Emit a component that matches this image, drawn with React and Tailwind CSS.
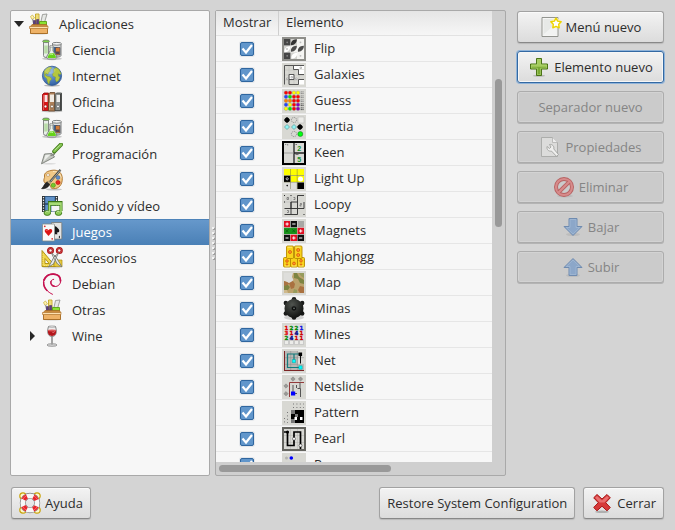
import React, { useState } from "react";

/* ---------- Category icons (22 x 22) ---------- */

function Icon({ children, size = 22, className = "" }) {
  return (
    <svg
      viewBox={`0 0 ${size} ${size}`}
      width={size}
      height={size}
      className={`shrink-0 ${className}`}
      aria-hidden="true"
    >
      {children}
    </svg>
  );
}

function BoxIcon() {
  return (
    <Icon>
      <ellipse cx="11" cy="20.5" rx="9.5" ry="1" fill="#000" opacity=".15" />
      <path d="M7.500 1h3.500v10H7.500z" fill="#f9e98c" stroke="#b99a12" strokeWidth=".8" />
      <path d="M8.500 3h1M8.500 5h1" stroke="#b99a12" strokeWidth=".6" />
      <path d="M2.500 3.500l2-1.500 2 3-2.500 1.500z" fill="#fff3b0" stroke="#c9b23c" strokeWidth=".7" />
      <path d="M4.500 6l1.500 6" stroke="#999" strokeWidth="1.200" />
      <path d="M5.500 7.500h2V12h-2zM8.500 6.500h2.200V12H8.500z" fill="#5b3b80" stroke="#3c2459" strokeWidth=".5" />
      <path d="M14.500 1.500l4.500-.5-2.500 8.500-4 1z" fill="#e6e8e5" stroke="#8b8d89" strokeWidth=".8" />
      <path d="M11.500 8.500h7v3.500h-7z" fill="#8ae234" stroke="#4e9a06" strokeWidth=".8" />
      <path d="M2 14L4 11.500h14.500l1.500 2.500z" fill="#c98a3c" stroke="#a86a22" strokeWidth=".7" />
      <path d="M2.500 15h17v5.500h-17z" fill="#eeb267" stroke="#a4661c" strokeWidth=".9" />
      <path d="M1.500 13.500h18.500v2H1.500z" fill="#fde0b0" stroke="#b57a34" strokeWidth=".7" />
    </Icon>
  );
}

function ScienceIcon() {
  return (
    <Icon>
      <ellipse cx="11" cy="19.800" rx="10" ry="1.400" fill="#000" opacity=".2" />
      <path d="M2.500 2v14.500a2.500 2 0 0 0 5 0V2z" fill="#e9eeea" stroke="#777c78" strokeWidth=".9" />
      <path d="M3.200 6.500h3.600v8h-3.600z" fill="#b9dca8" />
      <ellipse cx="5" cy="2.300" rx="3.400" ry="1.300" fill="#7ed649" stroke="#707570" strokeWidth=".8" />
      <path d="M11.500 5v11.500c0 2 8.500 2 8.500 0V5z" fill="#dfe2e3" stroke="#6d7070" strokeWidth=".9" />
      <ellipse cx="15.800" cy="4.800" rx="4.700" ry="1.400" fill="#f4f5f5" stroke="#6d7070" strokeWidth=".9" />
      <path d="M12.500 8h4v6h-4z" fill="#3b6495" />
      <path d="M14.500 8.500h4.500v7.500h-4.500z" fill="#d17a35" stroke="#4b4b57" strokeWidth=".7" />
      <path d="M15 12.500h3.500v2.500H15z" fill="#574756" />
      <path d="M9 7.500h3v4.500l3.500 5c.8 1.800-.3 3-1.800 3H7.800c-1.700 0-2.600-1.200-1.800-3L9 12z" fill="#edf3ec" stroke="#737973" strokeWidth=".9" />
      <path d="M8.500 14.200h4.400l2 3.200c.4 1.200-.3 1.700-1.300 1.700H8c-1.200 0-1.700-.6-1.200-1.700z" fill="#66d31b" />
      <path d="M8.700 15.500c1.500-1 2.400.2 3.300 0" stroke="#d9ffb4" strokeWidth=".9" fill="none" />
      <ellipse cx="10.500" cy="7.300" rx="2.200" ry=".8" fill="#fff" stroke="#7c817c" strokeWidth=".7" />
    </Icon>
  );
}

function GlobeIcon() {
  return (
    <Icon>
      <defs>
        <radialGradient id="globe" cx=".4" cy=".3" r=".75">
          <stop offset="0" stopColor="#86b1e4" />
          <stop offset="1" stopColor="#2c5c9f" />
        </radialGradient>
      </defs>
      <ellipse cx="11" cy="20.500" rx="8" ry="1.200" fill="#000" opacity=".25" />
      <circle cx="11" cy="10.800" r="9.600" fill="url(#globe)" stroke="#2d5795" strokeWidth=".8" />
      <path d="M3 6.500C5 3 8 1.800 10 2l.5 1.500-2 1.200 1 1.500-2 1.300-.5 2-2-1-.8 1.500 2 1.200 3 .8 1.500 2-2 2.200-.7 3.300-1.500-2.500-.5-3-2.500-2.500z" fill="#b5c73e" stroke="#879a24" strokeWidth=".4" />
      <path d="M12.500 4.500l2.500-2 3 2 2 4-.8 1.200-2-1 .3 2.500 1.500.8-1.500 3.500-2 1.500-1.200-2.500.2-2.500-2.500-.7-.5-2.500 1.500-1.300z" fill="#b5c73e" stroke="#879a24" strokeWidth=".4" />
      <ellipse cx="9" cy="5.500" rx="5.500" ry="3.500" fill="#fff" opacity=".17" />
    </Icon>
  );
}

function BindersIcon() {
  return (
    <Icon>
      <ellipse cx="11" cy="20.300" rx="10.500" ry="1" fill="#000" opacity=".22" />
      <path d="M1.500 3.500L3 2h4.500v17.500h-6z" fill="#d71717" stroke="#8f0808" strokeWidth=".8" />
      <path d="M3.500 4h3v7h-3z" fill="#f8e4e4" />
      <path d="M2.500 4v15" stroke="#ee6464" strokeWidth=".8" />
      <path d="M7.500 3l1.500-1.500h4.800V20H7.500z" fill="#ad8059" stroke="#684427" strokeWidth=".8" />
      <path d="M9 3.500h4V11H9z" fill="#f2ece4" />
      <path d="M8.500 12v7" stroke="#d3ad87" strokeWidth=".8" />
      <path d="M14 3.500L15.500 2H20.500v17.500H14z" fill="#8b8f8d" stroke="#393c3b" strokeWidth=".8" />
      <path d="M15.500 4h3.500v7h-3.500z" fill="#efefed" />
      <path d="M19.700 3v16" stroke="#333" strokeWidth="1" />
      <circle cx="4.500" cy="15.500" r="1.400" fill="#fff" stroke="#900" strokeWidth=".6" />
      <circle cx="11" cy="15.500" r="1.400" fill="#fff" stroke="#64482f" strokeWidth=".6" />
      <circle cx="17" cy="15.500" r="1.400" fill="#fff" stroke="#444" strokeWidth=".6" />
    </Icon>
  );
}

function TrowelIcon() {
  return (
    <Icon>
      <ellipse cx="8" cy="20.800" rx="7" ry=".8" fill="#000" opacity=".12" />
      <path d="M3.500 11l7.500-.5 2.500 3.500L.5 20.800z" fill="#c3c6c0" stroke="#787d76" strokeWidth=".9" />
      <path d="M4.500 12l5-.4L2.500 18.500z" fill="#eceeea" />
      <path d="M9.500 12.500l3.500-1 1-2.500" fill="none" stroke="#83887f" strokeWidth="1.500" />
      <path d="M13.200 8.500L20 1.500" stroke="#447b1b" strokeWidth="4" strokeLinecap="round" />
      <path d="M13.400 8.200L20 1.600" stroke="#85c553" strokeWidth="2.400" strokeLinecap="round" />
      <path d="M13.800 7.200l5-5" stroke="#c2e9a0" strokeWidth=".8" />
    </Icon>
  );
}

function PaletteIcon() {
  return (
    <Icon>
      <ellipse cx="13" cy="20.500" rx="8" ry=".9" fill="#000" opacity=".2" />
      <path d="M12 1.200c5.500-.5 9.300 3 9.300 8.500 0 6-3.300 10-8.500 10-4 0-2.800-3-4.800-4.500C6 13.800 3.800 15 3 12.500c-.7-2.500 1-3.500.5-5.500C3 4 6.500 1.700 12 1.200z" fill="#f2c987" stroke="#aa7128" strokeWidth=".9" />
      <path d="M12 2.500c4-.3 7.700 2 8 6.500" stroke="#fde8bf" fill="none" strokeWidth="1" />
      <ellipse cx="7" cy="6" rx="1.800" ry="1.300" fill="#f7f7f7" stroke="#b58543" strokeWidth=".6" />
      <circle cx="17" cy="8.500" r="1.900" fill="#5f8ecb" stroke="#345f9b" strokeWidth=".5" />
      <circle cx="17" cy="13.500" r="2.100" fill="#ec2222" stroke="#a40000" strokeWidth=".5" />
      <circle cx="12.300" cy="16.300" r="2.100" fill="#75c92b" stroke="#3f8506" strokeWidth=".5" />
      <path d="M19.500.800L8 14" stroke="#494b47" strokeWidth="2.200" />
      <path d="M19.300 1.300L9.500 12.500" stroke="#bfc2bc" strokeWidth=".8" />
      <path d="M6.500 12.500l2.500 2c-1.200 4-4.500 5.500-8.500 5.200C3 17.500 3.500 14 6.500 12.500z" fill="#272727" stroke="#111" strokeWidth=".5" />
      <path d="M6 12.800l2.700 2.200 1.300-1.600-2.600-2z" fill="#bfa77c" />
    </Icon>
  );
}

function MediaIcon() {
  return (
    <Icon>
      <path d="M1 1h16v16H1z" fill="#2e3436" />
      <path d="M4 1.500h10v7H4zM4 9.500h10v7H4z" fill="#5f91c8" stroke="#27517f" strokeWidth=".6" />
      <path d="M2.500 2v14.500M15.500 2v14.500" stroke="#eee" strokeWidth="1.200" strokeDasharray="1.300 1.300" />
      <path d="M10.500 10.500h8v6h-8z" fill="#f4f4f4" />
      <path d="M8.500 17V7.500h11.500V16" fill="none" stroke="#397513" strokeWidth="3" />
      <path d="M8.500 9h11.500" stroke="#397513" strokeWidth="3.600" />
      <ellipse cx="6.300" cy="18" rx="3.300" ry="2.400" fill="#8dc957" stroke="#397513" strokeWidth=".9" />
      <ellipse cx="17.500" cy="18" rx="3.300" ry="2.400" fill="#8dc957" stroke="#397513" strokeWidth=".9" />
      <path d="M8.500 17.500V8h11.500v9.500M8.500 9.300H20" fill="none" stroke="#a7dc76" strokeWidth="1.600" />
      <path d="M4.500 17.200c1-1.200 2.500-1 3-.5M15.500 17.200c1-1.200 2.500-1 3-.5" stroke="#e0f7c9" strokeWidth=".8" fill="none" />
    </Icon>
  );
}

function CardsIcon() {
  return (
    <Icon>
      <path d="M10.500 1.500h9.500a.8.800 0 0 1 .8.800v15a.8.800 0 0 1-.8.800h-9.500z" fill="#e3e3e1" stroke="#777975" strokeWidth=".8" />
      <path d="M14.500 5c1.800 1.800 3.800 3 3.800 4.800 0 1.500-1.400 2-2.600 1.400l.8 2.100h-3V7z" fill="#161616" />
      <path d="M17.500 16l1.500-1.500v3z" fill="#222" />
      <rect x="1.500" y="3" width="12" height="17" rx=".8" fill="#fafaf9" stroke="#888a85" strokeWidth=".8" />
      <path d="M7.500 15L4 11c-1.200-2.800 2-4 3.500-1.700C9 7 12.200 8.200 11 11z" fill="#dd1515" />
      <circle cx="3.800" cy="5.300" r=".9" fill="#dd2e2e" />
      <circle cx="11.200" cy="17.800" r=".9" fill="#dd2e2e" />
      <path d="M5 10c.3-1 1.300-1 1.700-.5" stroke="#ff9090" strokeWidth=".7" fill="none" />
    </Icon>
  );
}

function AccessoriesIcon() {
  return (
    <Icon>
      <ellipse cx="11" cy="20.600" rx="10" ry=".8" fill="#000" opacity=".15" />
      <path d="M1 3.500L14.500 19.500H1zM4 11.500v5h4.200z" fill="#f0d549" fillRule="evenodd" stroke="#a98b0c" strokeWidth=".9" />
      <path d="M2 7v11M3 18.500h9" stroke="#fff0a0" strokeWidth=".6" strokeDasharray="1 1" />
      <path d="M13 13h8v6.500h-8z" fill="#e8cb3d" stroke="#a98b0c" strokeWidth=".7" />
      <circle cx="9.500" cy="3.500" r="2.400" fill="none" stroke="#a90f13" strokeWidth="2.200" />
      <circle cx="18.300" cy="3.500" r="2.400" fill="none" stroke="#a90f13" strokeWidth="2.200" />
      <circle cx="9.500" cy="3.500" r="2.400" fill="none" stroke="#e86a6a" strokeWidth=".5" />
      <circle cx="18.300" cy="3.500" r="2.400" fill="none" stroke="#e86a6a" strokeWidth=".5" />
      <path d="M10.500 6l4.500 4 6 10-4.500-3L12 9.500zM17.500 6L13 10 7.500 20l5-3L15.500 10z" fill="#e8e9e6" stroke="#6e726c" strokeWidth=".8" />
      <circle cx="14" cy="9" r=".8" fill="#666" />
    </Icon>
  );
}

function DebianIcon() {
  return (
    <Icon>
      <path d="M11.500 21.300C6.500 19 2.800 15 2.500 10.200 2.200 4.800 6.500.900 12 .900c4.800 0 7.800 3 7.700 6.800-.1 3.600-2.700 6-6 5.800-2.600-.2-4.200-2-4-4.300.2-1.600 1.400-2.700 3-2.900" fill="none" stroke="#c5114f" strokeWidth="1" strokeLinecap="round" />
      <path d="M3 7C5 2.800 8.500 1 12.500 1.200c4.500.3 7 3 6.900 6.500" fill="none" stroke="#c5114f" strokeWidth="1.800" strokeLinecap="round" />
      <path d="M2.700 9c-.3 3.500 1.300 6.500 3.300 8.500" fill="none" stroke="#c5114f" strokeWidth="1.500" strokeLinecap="round" />
      <path d="M10 8.500c-.6 2.600 1.200 4.500 3.500 4.700" fill="none" stroke="#c5114f" strokeWidth="1.300" strokeLinecap="round" />
    </Icon>
  );
}

function WineIcon() {
  return (
    <Icon>
      <ellipse cx="11" cy="20" rx="5" ry="1.300" fill="#d9d9d9" stroke="#888" strokeWidth=".8" />
      <path d="M11 12v7.500" stroke="#777" strokeWidth="1.800" />
      <path d="M11 12v7.500" stroke="#eee" strokeWidth=".6" />
      <path d="M7.500 1.500C6 6 6.300 11.500 11 11.500S16 6 14.500 1.500z" fill="#eee" stroke="#777" strokeWidth=".9" />
      <path d="M6.900 5.500h8.200c.2 3.300-1 5.400-4.100 5.400S6.700 8.800 6.900 5.500z" fill="#b3161c" />
      <ellipse cx="11" cy="5.500" rx="4.100" ry=".9" fill="#dd5a5a" />
      <path d="M11.500 7.500c1 0 2-.3 2.200-1" stroke="#f39b9b" fill="none" strokeWidth=".8" />
      <ellipse cx="11" cy="1.600" rx="3.500" ry=".7" fill="#f8f8f8" stroke="#888" strokeWidth=".6" />
    </Icon>
  );
}

/* ---------- Game icons (24 x 24) ---------- */

function Tile({ children, bg = "#d8d8d3" }) {
  return (
    <Icon size={24}>
      <rect width="24" height="24" fill={bg} />
      {children}
    </Icon>
  );
}

function FlipIcon() {
  const leaf = "M.500 6.200C-.300 3 2.500 0 6.300.200 6.800 3 4 6.500.500 6.200z";
  return (
    <Tile bg="#8e8e8a">
      <path d="M2 2h20v20H2z" fill="#f4f4f2" />
      <path d="M2 2h6.500v6.500H2zM2 15.500h6.500V22H2z" fill="#454545" />
      <path d="M9 2h6v6.500H9zM2 9h6.500v6H2zM9 15.500h6V22H9z" fill="#d2d2ce" />
      <path d={leaf} transform="translate(8.500 2)" fill="#333" />
      <path d={leaf} transform="translate(8.500 8.500)" fill="#4c4c4c" />
      <path d={leaf} transform="translate(15.500 8.500)" fill="#4c4c4c" />
      <path d={leaf} transform="translate(2 9)" fill="#fff" />
      <path d={leaf} transform="translate(9 15.500)" fill="#fff" />
      <circle cx="5.200" cy="5.300" r=".9" fill="#858585" />
      <circle cx="5.200" cy="18.800" r=".9" fill="#858585" />
      <circle cx="18.500" cy="5.300" r=".9" fill="#bbb" />
      <circle cx="18.500" cy="18.800" r=".9" fill="#bbb" />
      <circle cx="5" cy="12" r=".8" fill="#999" />
    </Tile>
  );
}

function GalaxiesIcon() {
  return (
    <Tile>
      <path d="M3 7h19M3 12h19M3 17h19M7 3v18M12 3v18M17 3v18" stroke="#c2c2be" strokeWidth=".6" />
      <path d="M12 2.500h10v4h-5v0h-5zM17 7h5v4h-5zM17 17h5v4.500h-5zM7.500 12h4v4h-4z" fill="#fff" />
      <path d="M2.500 21.500v-19h19.500M11.500 2.500V6.500H16.500V11.500H22M7 11.500h5v5H7zM7 16.500v5h9.500V16.500H22M16.500 7V12" fill="none" stroke="#555" strokeWidth="1" />
      <path d="M9 13.500h1.500V15H9zM4.500 15H6v1.500H4.500zM13.500 15H15v1.500h-1.500zM18 4h1.500v1.500H18z" fill="#fff" stroke="#888" strokeWidth=".5" />
    </Tile>
  );
}

const guessRows = [
  ["#f00", "#f00", "#ff0", "#ff0"],
  ["#24f", "#0e0", "#f00", "#f00"],
  ["#ff8000", "#ff8000", "#f00", "#f00"],
  ["#24f", "#ff0", "#f00", "#80b"],
  ["#ff0", "#0e0", "#f00", "#80b"],
];

function GuessIcon() {
  return (
    <Tile>
      {guessRows.map((row, y) => (
        <g key={y}>
          {row.map((c, x) => (
            <circle key={x} cx={4 + x * 4} cy={3.7 + y * 4} r="1.800" fill={c} stroke="#666" strokeWidth=".25" />
          ))}
          <path d={`M18.700 ${2.900 + y * 4}h3M18.700 ${4.600 + y * 4}h3`} stroke={y > 2 ? "#333" : "#777"} strokeWidth=".9" strokeDasharray="1.200 .5" />
        </g>
      ))}
    </Tile>
  );
}

function InertiaIcon() {
  return (
    <Tile>
      <path d="M16 2h6v6h-6z" fill="#ebebe8" stroke="#bdbdb9" strokeWidth=".6" />
      <path d="M5 2l1.800 1.200L8 5 6.800 6.800 5 8 3.200 6.800 2 5l1.200-1.800zM18 9l1.800 1.200L21 12l-1.200 1.800L18 15l-1.800-1.200L15 12l1.200-1.800z" fill="#000" />
      <circle cx="12" cy="5" r="2.600" fill="none" stroke="#888" strokeWidth=".9" strokeDasharray="1.200 .8" />
      <circle cx="12" cy="19" r="2.600" fill="none" stroke="#888" strokeWidth=".9" strokeDasharray="1.200 .8" />
      <path d="M5 9.500L7.500 12 5 14.500 2.500 12zM12 9.500l2.500 2.500-2.500 2.500L9.500 12z" fill="#8ff4f4" stroke="#559a9a" strokeWidth=".7" />
      <circle cx="18.300" cy="19" r="2.500" fill="#0f1" stroke="#176b17" strokeWidth=".5" />
    </Tile>
  );
}

function KeenIcon() {
  return (
    <Tile bg="#000">
      <path d="M2 2h20v20H2z" fill="#d9d9d5" />
      <path d="M12 2v20M12 12h10" stroke="#222" strokeWidth="1.300" />
      <path d="M2 12h10" stroke="#888" strokeWidth=".7" />
      <path d="M3.200 3.500h1M5 3.800h1.200M13.500 3.500h1.500M13.500 13.500h3" stroke="#666" strokeWidth=".9" />
      <text x="15.300" y="10.200" fontSize="7" fontFamily="Liberation Sans, sans-serif" fontWeight="bold" fill="#16902b">2</text>
      <text x="15.300" y="20.500" fontSize="7" fontFamily="Liberation Sans, sans-serif" fontWeight="bold" fill="#16902b">5</text>
    </Tile>
  );
}

function LightUpIcon() {
  return (
    <Tile>
      <path d="M2 2h20v6.300H2zM8.700 8.700h13.300v6.300H8.700z" fill="#ff0" />
      <path d="M2 8.700h6.400v6.300H2zM15.300 15.500H22V22h-6.700z" fill="#000" />
      <path d="M2 15.500h6.400V22H2zM8.700 15.500h6.300V22H8.700z" fill="#dededb" />
      <path d="M8.500 2v20M15.200 2v20M2 8.500h20M2 15.200h20" stroke="#77774f" strokeWidth=".5" />
      <circle cx="18.500" cy="12" r="2.500" fill="#fff" />
      <circle cx="5.200" cy="11.800" r="1.100" fill="none" stroke="#fff" strokeWidth=".7" />
      <circle cx="5.200" cy="18.600" r=".8" fill="#111" />
    </Tile>
  );
}

function LoopyIcon() {
  return (
    <Tile>
      <path d="M2.500 9H9M9 2.500V9M15.500 15.500H22M15.500 15.500v6.500" fill="none" stroke="#bebeba" strokeWidth=".6" />
      <path d="M22 2.500h-6.500V9H9v6.500H2.500M9 15.500v6H2.500M9 9v6.500M9 21.500h6.500M15.500 9v6.500H9M22 9v6.500h-6.500V21.500" fill="none" stroke="#2b2b2b" strokeWidth=".9" />
      <path d="M2 2h1v1H2zM8.500 2h1v1h-1zM2 8.500h1v1H2zM21.500 21h1v1h-1z" fill="#222" />
      <path d="M5 4.500h1.500v2H5zM11.500 4.500H13v2h-1.500M18 10.500h1.500v1.200H18V13h1.500M5 17.500h1.500v2H5" fill="none" stroke="#666" strokeWidth=".7" />
    </Tile>
  );
}

function MagnetsIcon() {
  return (
    <Tile>
      <path d="M2 2h6v6.200H2zM15.500 8.800H22V15h-6.500zM8.500 15.700h6.500V22H8.500z" fill="#e00f22" />
      <path d="M8.700 2H15v6.200H8.700zM2 15.700h6V22H2zM15.500 15.700H22V22h-6.500z" fill="#101010" />
      <path d="M15.800 2H22v6.200h-6.200z" fill="#a7a7a4" />
      <path d="M2 8.800h13V15H2z" fill="#18951b" />
      <path d="M3.500 10.300l3 3m0-3l-3 3M10.200 10.300l3 3m0-3l-3 3" stroke="#0a5c0c" strokeWidth=".8" />
      <path d="M3.500 5h3.200M5.100 3.500v3.200M10.200 5h3.300M17.100 12h3.300M18.700 10.400v3.200M3.500 19h3M10.200 19h3.300M11.800 17.400v3.200M17 19h3.300" stroke="#fff" strokeWidth="1" />
    </Tile>
  );
}

function MahjonggIcon() {
  const tile = (x, y, w, h, key) => (
    <rect key={key} x={x} y={y} width={w} height={h} rx="1" fill="#f8d21c" stroke="#b78a00" strokeWidth=".9" />
  );
  return (
    <Icon size={24}>
      {tile(1.5, 12.500, 7, 9.500, "a")}
      {tile(8.500, 12.500, 7, 9.500, "b")}
      {tile(15.500, 12.500, 7, 9.500, "c")}
      {tile(4.500, 1, 7, 12.500, "d")}
      {tile(12.500, 1, 7.500, 12.500, "e")}
      <path d="M5.500 2.200h4.500M13.500 2.200h5M3 21h4.500M10 21h4.500M17 21h4.500" stroke="#fff08a" strokeWidth=".8" />
      <g fill="#ff9b26" stroke="#d9560a" strokeWidth=".8">
        <circle cx="8" cy="7" r="1.500" />
        <circle cx="16.200" cy="5" r="1.500" />
        <circle cx="16.200" cy="10" r="1.500" />
        <circle cx="5" cy="16" r="1.300" />
        <circle cx="12" cy="18.500" r="1.400" />
        <circle cx="19" cy="15.800" r="1.300" />
        <circle cx="5" cy="19.500" r=".7" />
        <circle cx="19" cy="19.500" r=".7" />
      </g>
    </Icon>
  );
}

function MapIcon() {
  return (
    <Tile>
      <path d="M2 2h20v20H2z" fill="#bba26c" />
      <path d="M2 2h9l-1 4 1.500 3-4 3.500L5 11l-3-1z" fill="#dededb" />
      <path d="M12 2h3l2 4 5 3v4l-4-1-2-4-4-1zM2 14l3-1 3 3-2 3-4 0z" fill="#7d8442" />
      <path d="M7 12l4-2 2 3-1 4-3 1zM18 15l4 1v6h-4l-2-3z" fill="#aa7140" />
      <path d="M17 2h5v5l-3-2zM12 18l3 1v3h-4z" fill="#969b5c" />
      <path d="M2 19l3 0 1 3H2z" fill="#cfb98c" />
      <path d="M2 10l3 1 2.500 1.500-2 1.500-3.500 1z" fill="#a97344" />
    </Tile>
  );
}

function MinasIcon() {
  return (
    <Icon size={24}>
      <defs>
        <radialGradient id="mine-body" cx=".4" cy=".3" r=".75">
          <stop offset="0" stopColor="#50544f" />
          <stop offset="1" stopColor="#0b0c0b" />
        </radialGradient>
      </defs>
      <ellipse cx="12" cy="20.500" rx="10" ry="2.500" fill="#000" opacity=".15" />
      <g fill="#1a1b1a">
        <circle cx="12" cy="2.300" r="2.300" />
        <circle cx="12" cy="20.500" r="2.300" />
        <circle cx="3.800" cy="6" r="2.200" />
        <circle cx="20.200" cy="6" r="2.200" />
        <circle cx="3.800" cy="16.500" r="2.200" />
        <circle cx="20.200" cy="16.500" r="2.200" />
      </g>
      <path d="M12 1.500l4.500 1.800 4.300 3.200.7 5-.7 5-4.300 3.200-4.500 1.800-4.500-1.800-4.300-3.200-.7-5 .7-5 4.300-3.200z" fill="url(#mine-body)" />
      <circle cx="12" cy="11.500" r="2.500" fill="#0a0a0a" stroke="#3e413f" strokeWidth=".6" />
      <circle cx="12" cy="11.300" r=".9" fill="#66706c" />
    </Icon>
  );
}

const mineDigits = [
  [["1", "#d00"], ["2", "#080"], ["2", "#080"], ["1", "#11d"]],
  [["3", "#d00"], ["1", "#c00"], ["4", "#008"], ["1", "#c00"]],
  [["2", "#080"], ["4", "#008"], ["1", "#c00"], ["1", "#c00"]],
];

function MinesIcon() {
  return (
    <Tile>
      <path d="M2 2h20v15H2z" fill="#dedede" />
      {mineDigits.map((row, y) =>
        row.map(([d, c], x) => (
          <text key={`${x}-${y}`} x={4.500 + x * 5} y={6.500 + y * 5} textAnchor="middle" fontSize="5.500" fontWeight="bold" fontFamily="DejaVu Sans, sans-serif" fill={c} stroke={c} strokeWidth=".3">
            {d}
          </text>
        ))
      )}
      <path d="M2.500 17.500h4v4h-4zM7.500 17.500h4v4h-4zM12.500 17.500h4v4h-4zM17.500 17.500h4v4h-4z" fill="#ecece9" stroke="#bbb" strokeWidth=".6" />
    </Tile>
  );
}

function NetIcon() {
  return (
    <Tile>
      <path d="M2 2h20v20H2z" fill="#b9b9b6" />
      <path d="M16 2h6v14h-6z" fill="#dcdcd8" />
      <path d="M8.700 2v20M15.400 2v20M2 8.700h20M2 15.400h20" stroke="#8d8d8a" strokeWidth=".5" />
      <path d="M2.500 2v20M2 21.500h20" stroke="#7c2525" strokeWidth="1" />
      <path d="M18.500 5H5.500v13.500h13M12 5.500V12" fill="none" stroke="#137b7b" strokeWidth="1.200" />
      <path d="M18.500 7v7.500" stroke="#111" strokeWidth="1" />
      <path d="M16.500 3.500h3.600v3.600h-3.600z" fill="#000" />
      <path d="M10.300 10.500h3.200v3.200h-3.200zM16.800 16.800h3.400v3.400h-3.400z" fill="#0ff" stroke="#088" strokeWidth=".4" />
    </Tile>
  );
}

function NetslideIcon() {
  return (
    <Tile>
      <g fill="#9a9a96" stroke="#777" strokeWidth=".4">
        <path d="M11 1.800l2.200 2.200L11 6.200 8.800 4zM18.500 1.800l2.200 2.200-2.200 2.200L16.300 4zM4 8.800L6.200 11 4 13.200 1.800 11zM4 16.500l2.200 2.200L4 20.900l-2.200-2.200z" />
      </g>
      <path d="M7.500 22V7.500H22" fill="none" stroke="#943b3b" strokeWidth="1" />
      <path d="M11 18.500V10M11 18.500h4M18 7.500V13.500M15.500 13.500H18.500V22M14.500 10v3" fill="none" stroke="#555" strokeWidth="1" />
      <path d="M9 16.500h4.200v4H9z" fill="#00f" />
    </Tile>
  );
}

function PatternIcon() {
  return (
    <Tile>
      <path d="M11 3h11M11 6.500h11" stroke="#777" strokeWidth="1" strokeDasharray="1 2.400" />
      <path d="M5.500 11v11M2.500 17v5" stroke="#777" strokeWidth="1" strokeDasharray="1 2.400" />
      <path d="M9 9h13v13H9z" fill="#000" />
      <path d="M9 9h4v4H9zM13 13h3v3h-3zM9 18h4v4H9z" fill="#777" />
      <path d="M12.500 16H15v3h-2.500zM18 16h2.500v3H18z" fill="#fff" />
    </Tile>
  );
}

function PearlIcon() {
  return (
    <Tile bg="#64645f">
      <path d="M2 2h20v20H2z" fill="#d8d8d4" />
      <path d="M8.500 2v20M15.500 2v20M2 8.500h20M2 15.500h20" stroke="#b4b4b0" strokeWidth=".5" />
      <path d="M2 5h3.500v13.500h6.500V5h6.500V22" fill="none" stroke="#000" strokeWidth="1.700" />
      <circle cx="5.500" cy="5" r="1.600" fill="#000" />
      <circle cx="12" cy="11.800" r="1.500" fill="#fff" stroke="#222" strokeWidth=".5" />
      <circle cx="18.500" cy="18.500" r="1.500" fill="#fff" stroke="#222" strokeWidth=".5" />
    </Tile>
  );
}

function PegsIcon() {
  return (
    <Tile>
      <circle cx="4.500" cy="5" r="1.500" fill="#b4b4b0" />
      <circle cx="9.300" cy="5" r="1.800" fill="#00f" />
      <circle cx="4.500" cy="12" r="1.800" fill="#00f" />
      <circle cx="14" cy="12" r="1.800" fill="#00f" />
    </Tile>
  );
}

/* ---------- Button icons ---------- */

function NewMenuIcon() {
  return (
    <Icon>
      <path d="M2 1.500h16v19H2z" fill="#f6f6f5" stroke="#888a85" strokeWidth=".9" />
      <path d="M3.500 3h13v16h-13z" fill="#e7e9e7" />
      <path d="M4 18l12.500-11v12H4z" fill="#fafafa" opacity=".6" />
      <circle cx="16" cy="7" r="5" fill="#fff7b0" opacity=".7" />
      <path d="M16 2l1.600 3.100 3.600.600-2.500 2.600.5 3.500-3.200-1.500-3.200 1.500.5-3.500-2.500-2.600 3.600-.6z" fill="#fff" stroke="#edd400" strokeWidth="1.400" strokeLinejoin="round" />
    </Icon>
  );
}

function PlusIcon() {
  return (
    <Icon>
      <ellipse cx="11" cy="19.800" rx="6" ry="1" fill="#000" opacity=".18" />
      <path d="M8.500 2.500h5V8H19.500v5H13.500v6.500h-5V13H2.500V8H8.500z" fill="#79a934" stroke="#466f12" strokeWidth="1" />
      <path d="M9.300 3.300h3.400v5.500h6v2H3.300v-2h6z" fill="#a5cc5e" />
      <path d="M9.400 3.400h3.200v5.500h6v3.200h-6v6.500H9.400v-6.500h-6V8.900h6z" fill="none" stroke="#b5d77c" strokeWidth=".6" />
    </Icon>
  );
}

function PropertiesIcon() {
  return (
    <Icon>
      <path d="M2.500 1.500h11l5 5v14h-16z" fill="#dcdcdb" stroke="#a7a8a6" strokeWidth=".9" />
      <path d="M13.500 1.500v5h5" fill="#eee" stroke="#b0b0ae" strokeWidth=".8" />
      <path d="M8 10.500l2.500 2 1.500-1.500-1.500-2.500c2.500-.5 5 1.500 4.300 4.500l4.700 5.500-2 1.800-5-5.200c-3 .5-5-1.600-4.500-4.600z" fill="#efefee" stroke="#a0a19f" strokeWidth=".9" />
    </Icon>
  );
}

function ForbiddenIcon() {
  return (
    <Icon>
      <ellipse cx="12" cy="20" rx="8" ry="1.400" fill="#000" opacity=".08" />
      <circle cx="11" cy="11" r="8" fill="none" stroke="#b76262" strokeWidth="4" />
      <circle cx="11" cy="11" r="8" fill="none" stroke="#d78b8b" strokeWidth="2.200" />
      <path d="M5.800 16.200L16.200 5.800" stroke="#b76262" strokeWidth="4" />
      <path d="M5.300 16.700L16.700 5.300" stroke="#d78b8b" strokeWidth="2.200" />
    </Icon>
  );
}

function ArrowIcon({ up = false }) {
  return (
    <Icon>
      <ellipse cx="11" cy={up ? 19.500 : 18.500} rx="7" ry="1.600" fill="#000" opacity=".07" />
      <path
        d={up ? "M11 2.500L20 11.500H15V19.500H7V11.500H2z" : "M7 2.500h8v8h5L11 19.500 2 10.500h5z"}
        fill="#8ca7c9"
        stroke="#6f8bb0"
        strokeWidth="1"
      />
      <path
        d={up ? "M11 4L17.800 10.500H14v8H8v-8H4.200z" : "M8 3.500h6v8h3.800L11 18l-6.800-6.500H8z"}
        fill="none"
        stroke="#a5bbd6"
        strokeWidth=".7"
      />
    </Icon>
  );
}

function LifebuoyIcon() {
  return (
    <Icon>
      <g fill="#fff8cf" stroke="#c9a30b" strokeWidth="1.200">
        <circle cx="4" cy="4" r="3.200" />
        <circle cx="18" cy="4" r="3.200" />
        <circle cx="4" cy="18" r="3.200" />
        <circle cx="18" cy="18" r="3.200" />
      </g>
      <circle cx="11" cy="11" r="7.200" fill="none" stroke="#777" strokeWidth="6" />
      <circle cx="11" cy="11" r="7.200" fill="none" stroke="#f7f7f6" strokeWidth="4.800" />
      <circle cx="11" cy="11" r="7.200" fill="none" stroke="#e8262b" strokeWidth="4.800" strokeDasharray="4.600 6.710" strokeDashoffset="-3.350" />
      <circle cx="11" cy="11" r="8" fill="none" stroke="#ff9090" strokeWidth=".6" strokeDasharray="4.500 8.060" strokeDashoffset="-4.030" />
    </Icon>
  );
}

function CloseIcon() {
  return (
    <Icon>
      <ellipse cx="11" cy="19.800" rx="7" ry="1.300" fill="#000" opacity=".22" />
      <path d="M6 2.500L11 7l5-4.500 3.300 3.300-4.600 4.900 4.600 4.800-3.300 3.300-5-4.600-5 4.600-3.300-3.300 4.600-4.800-4.600-4.900z" fill="#d63a3a" stroke="#a81616" strokeWidth="1" strokeLinejoin="round" />
      <path d="M6 3.900L11 8.400l5-4.500 1.900 1.900L13.500 10.500h-5L4.100 5.800z" fill="#f08282" opacity=".75" />
    </Icon>
  );
}

/* ---------- Widgets ---------- */

function PushButton({ icon, children, focused = false, disabled = false }) {
  const look = disabled
    ? "border-[#acacac] bg-[#cbcbcb] text-[#858585] shadow-[inset_0_0_0_1px_#d3d3d3,0_1px_0_#b4b4b4]"
    : focused
      ? "border-[#3369a3] bg-linear-to-b from-[#f3f3f3] to-[#dcdcdc] text-[#2d2d2d] shadow-[inset_0_0_0_1px_#f6f6f6,0_0_0_1px_#8fb3d9]"
      : "border-[#a2a2a2] border-b-[#888888] bg-linear-to-b from-[#f3f3f3] to-[#dcdcdc] text-[#2d2d2d] shadow-[inset_0_1px_0_#fafafa,0_1px_1px_#b9b9b9]";
  return (
    <button
      type="button"
      disabled={disabled}
      className={`flex h-8 shrink-0 items-center justify-center gap-1 whitespace-nowrap rounded-[3px] border px-[7px] ${look}`}
    >
      {icon}
      <span>{children}</span>
    </button>
  );
}

function Expander({ open, label, onClick }) {
  return (
    <button type="button" aria-label={label} aria-expanded={open} onClick={onClick} className="flex h-full w-[14px] items-center justify-center">
      <svg viewBox="0 0 10 10" width="10" height="10" aria-hidden="true">
        <path d={open ? "M0 2h10L5 8z" : "M3 0v10l5-5z"} fill="#262626" />
      </svg>
    </button>
  );
}

const categories = [
  ["Ciencia", ScienceIcon],
  ["Internet", GlobeIcon],
  ["Oficina", BindersIcon],
  ["Educación", ScienceIcon],
  ["Programación", TrowelIcon],
  ["Gráficos", PaletteIcon],
  ["Sonido y vídeo", MediaIcon],
  ["Juegos", CardsIcon],
  ["Accesorios", AccessoriesIcon],
  ["Debian", DebianIcon],
  ["Otras", BoxIcon],
  ["Wine", WineIcon],
];

const games = [
  ["Flip", FlipIcon],
  ["Galaxies", GalaxiesIcon],
  ["Guess", GuessIcon],
  ["Inertia", InertiaIcon],
  ["Keen", KeenIcon],
  ["Light Up", LightUpIcon],
  ["Loopy", LoopyIcon],
  ["Magnets", MagnetsIcon],
  ["Mahjongg", MahjonggIcon],
  ["Map", MapIcon],
  ["Minas", MinasIcon],
  ["Mines", MinesIcon],
  ["Net", NetIcon],
  ["Netslide", NetslideIcon],
  ["Pattern", PatternIcon],
  ["Pearl", PearlIcon],
  ["Pegs", PegsIcon],
];

function CategoryTree() {
  const [open, setOpen] = useState(true);
  const [selected, setSelected] = useState("Juegos");
  return (
    <nav aria-label="Categorías" className="w-[200px] shrink-0 overflow-hidden rounded-[2px] border border-[#a9a9a9] bg-[#f7f7f7]">
      <div className="flex h-[26px] items-center pb-px pl-px">
        <Expander open={open} label="Aplicaciones" onClick={() => setOpen(!open)} />
        <button type="button" className="ml-[2px] flex h-full flex-1 items-center gap-[9px]">
          <BoxIcon />
          <span>Aplicaciones</span>
        </button>
      </div>
      {open && (
        <ul>
          {categories.map(([name, Glyph]) => {
            const active = name === selected;
            return (
              <li
                key={name}
                className={`flex h-[26px] items-center pb-px pl-[14px] ${active ? "bg-linear-to-b from-[#6799cc] to-[#4a80b6] text-white shadow-[inset_0_1px_0_#4d83b9]" : ""}`}
              >
                {name === "Wine" ? <Expander open={false} label="Wine" /> : <span className="w-[14px]" />}
                <button type="button" aria-pressed={active} onClick={() => setSelected(name)} className="ml-[2px] flex h-full flex-1 items-center gap-[9px]">
                  <Glyph />
                  <span>{name}</span>
                </button>
              </li>
            );
          })}
        </ul>
      )}
    </nav>
  );
}

function PaneHandle() {
  return (
    <div className="flex w-[5px] shrink-0 flex-col items-center justify-center gap-[3px]">
      {[0, 1, 2, 3, 4, 5, 6].map((n) => (
        <span key={n} className="size-[2px] bg-[#f4f4f4] shadow-[1px_1px_0_#a0a0a0]" />
      ))}
    </div>
  );
}

function ShowCheckbox({ name }) {
  return (
    <span className="ml-[23px] grid size-4 place-items-center">
      <input
        type="checkbox"
        defaultChecked
        aria-label={`Mostrar ${name}`}
        className="peer col-start-1 row-start-1 size-[14px] appearance-none rounded-[2px] border border-[#8d8d8d] bg-white shadow-[0_0_0_1px_#e3e6ea] checked:border-[#2f669f] checked:bg-[#6196cb]"
      />
      <svg viewBox="0 0 14 14" width="14" height="14" className="pointer-events-none invisible col-start-1 row-start-1 peer-checked:visible" aria-hidden="true">
        <path d="M2.500 6.500L6 10.500l6-7.500" fill="none" stroke="#fff" strokeWidth="2.200" />
      </svg>
    </span>
  );
}

function ItemTable() {
  return (
    <section aria-label="Elementos" className="flex min-w-0 flex-1 flex-col rounded-[2px] border border-[#a9a9a9] bg-[#cfcfcf]">
      <div className="flex min-h-0 flex-1">
        <div className="min-w-0 flex-1 overflow-hidden bg-[#f7f7f7]">
          <table className="w-full table-fixed border-separate border-spacing-0">
            <colgroup>
              <col className="w-[63px]" />
              <col />
            </colgroup>
            <thead>
              <tr className="h-[25px] bg-linear-to-b from-[#e5e5e5] to-[#f7f7f7] text-left">
                <th scope="col" className="border-r border-b border-[#e2e2e2] border-r-[#cfcfcf] p-0 pb-[2px] pl-[7px] font-normal">
                  Mostrar
                </th>
                <th scope="col" className="border-b border-[#e2e2e2] p-0 pb-[2px] pl-[7px] font-normal">
                  Elemento
                </th>
              </tr>
            </thead>
            <tbody>
              {games.map(([name, Glyph]) => (
                <tr key={name} className="h-[26px]">
                  <td className="border-b border-[#e6e6e6] p-0">
                    <ShowCheckbox name={name} />
                  </td>
                  <td className="border-b border-[#e6e6e6] p-0 pl-[3px]">
                    <div className="flex h-[25px] items-center gap-2">
                      <Glyph />
                      <span className="pb-px">{name}</span>
                    </div>
                  </td>
                </tr>
              ))}
            </tbody>
          </table>
        </div>
        <div className="w-[13px] shrink-0 px-[3px] pt-[68px]">
          <div className="h-[148px] rounded-full bg-[#999999]" />
        </div>
      </div>
      <div className="h-[13px] shrink-0 px-[3px] py-[3px]">
        <div className="h-[7px] w-[172px] rounded-full bg-[#999999]" />
      </div>
    </section>
  );
}

export default function App() {
  return (
    <div className="flex h-screen flex-col gap-[11px] bg-[#d4d4d4] pt-[10px] pr-[11px] pb-[11px] pl-[10px] font-['Open_Sans','Noto_Sans',sans-serif] text-[13px] leading-[18px] text-[#2d2d2d]">
      <main className="flex min-h-0 flex-1">
        <CategoryTree />
        <PaneHandle />
        <ItemTable />
        <aside className="ml-[11px] flex w-[147px] shrink-0 flex-col gap-2 pt-px">
          <PushButton icon={<NewMenuIcon />}>Menú nuevo</PushButton>
          <PushButton icon={<PlusIcon />} focused>Elemento nuevo</PushButton>
          <PushButton disabled>Separador nuevo</PushButton>
          <PushButton icon={<PropertiesIcon />} disabled>Propiedades</PushButton>
          <PushButton icon={<ForbiddenIcon />} disabled>Eliminar</PushButton>
          <PushButton icon={<ArrowIcon />} disabled>Bajar</PushButton>
          <PushButton icon={<ArrowIcon up />} disabled>Subir</PushButton>
        </aside>
      </main>
      <footer className="flex items-center justify-between pl-px">
        <PushButton icon={<LifebuoyIcon />}>Ayuda</PushButton>
        <div className="flex gap-2">
          <PushButton>Restore System Configuration</PushButton>
          <PushButton icon={<CloseIcon />}>Cerrar</PushButton>
        </div>
      </footer>
    </div>
  );
}
